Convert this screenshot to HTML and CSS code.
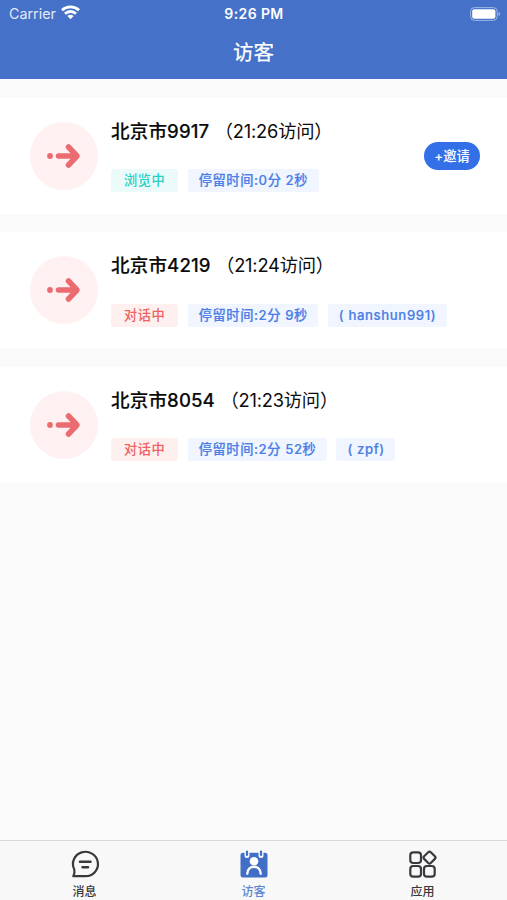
FILE: index.html
```html
<!DOCTYPE html>
<html lang="zh-CN">
<head>
<meta charset="utf-8">
<title>访客</title>
<link rel="stylesheet" href="styles.css">
</head>
<body>
<header class="header">
  <div class="status">
    <div class="carrier"><span>Carrier</span>
      <svg class="wifi" viewBox="0 0 19 15" width="19" height="15"><g fill="none" stroke="#fff" stroke-width="2.800"><path d="M1 5.300a12.400 12.400 0 0 1 17 0"/><path d="M4 8.700a8 8 0 0 1 11 0"/></g><path d="M9.500 14.300 6.400 11.100a4.500 4.500 0 0 1 6.200 0z" fill="#fff"/></svg>
    </div>
    <div class="clock">9:26 PM</div>
    <svg class="battery" viewBox="0 0 31 14" width="31" height="14"><rect x=".6" y=".6" width="26.600" height="12.800" rx="3.800" fill="none" stroke="#9db5e5" stroke-width="1"/><rect x="2.200" y="2.300" width="23.200" height="9.400" rx="2" fill="#fff"/><path d="M28.500 5v4q1.700-.6 1.700-2t-1.700-2z" fill="#9db5e5"/></svg>
  </div>
  <h1 class="title">访客</h1>
</header>
<main class="list">
  <section class="card">
    <div class="avatar"><svg viewBox="0 0 36 28" width="36" height="28"><circle cx="4" cy="14" r="2.900"/><path d="M12.500 14h18M22.500 5l8.500 9-8.500 9"/></svg></div>
    <div class="info">
      <div class="name"><b>北京市9917</b><span class="time">（21:26访问）</span></div>
      <div class="tags"><span class="tag active">浏览中</span><span class="tag">停留时间:0分 2秒</span></div>
    </div>
    <button class="invite">+邀请</button>
  </section>
  <section class="card">
    <div class="avatar"><svg viewBox="0 0 36 28" width="36" height="28"><circle cx="4" cy="14" r="2.900"/><path d="M12.500 14h18M22.500 5l8.500 9-8.500 9"/></svg></div>
    <div class="info">
      <div class="name"><b>北京市4219</b><span class="time">（21:24访问）</span></div>
      <div class="tags"><span class="tag talk">对话中</span><span class="tag">停留时间:2分 9秒</span><span class="tag">( hanshun991)</span></div>
    </div>
  </section>
  <section class="card">
    <div class="avatar"><svg viewBox="0 0 36 28" width="36" height="28"><circle cx="4" cy="14" r="2.900"/><path d="M12.500 14h18M22.500 5l8.500 9-8.500 9"/></svg></div>
    <div class="info">
      <div class="name"><b>北京市8054</b><span class="time">（21:23访问）</span></div>
      <div class="tags"><span class="tag talk">对话中</span><span class="tag">停留时间:2分 52秒</span><span class="tag">( zpf)</span></div>
    </div>
  </section>
</main>
<nav class="tabs">
  <a class="tab"><svg viewBox="0 0 30 30" width="30" height="30" fill="none" stroke="#38393d" stroke-width="2.200" stroke-linecap="round" stroke-linejoin="round"><path d="M3.300 27.200H15.500A12.500 12.200 0 1 0 4.300 20.500C4.800 23 4.400 25 3.300 27.200z"/><path d="M10 12.800h10.500M12.500 18.300h5.500" stroke-width="2.500"/></svg><span>消息</span></a>
  <a class="tab on"><svg viewBox="0 0 30 30" width="30" height="30"><rect x="1.500" y="3.800" width="27" height="24.700" rx="2.500" fill="#416fc8"/><g fill="none" stroke-linecap="round"><path d="M8 3.500v3M22 3.500v3" stroke="#f8f8f8" stroke-width="5"/><path d="M8 2.500v3.500M22 2.500v3.500" stroke="#416fc8" stroke-width="2.200"/><path d="M8.300 24.800c.3-9.500 13.100-9.500 13.400 0" stroke="#fff" stroke-width="2.400"/></g><circle cx="15" cy="12.300" r="4.300" fill="#fff"/></svg><span>访客</span></a>
  <a class="tab"><svg viewBox="0 0 30 30" width="30" height="30" fill="none" stroke="#38393d" stroke-width="2.200" stroke-linejoin="round"><rect x="2.300" y="3.300" width="10.700" height="10.700" rx="3"/><rect x="2.300" y="17" width="10.700" height="10.700" rx="3"/><rect x="16" y="17" width="10.700" height="10.700" rx="3"/><rect x="16.800" y="3.900" width="9.400" height="9.400" rx="1.800" transform="rotate(45 21.500 8.600)"/></svg><span>应用</span></a>
</nav>
</body>
</html>
```
FILE: styles.css
```css
* { box-sizing: border-box; }
body {
  margin: 0;
  height: 900px;
  display: flex;
  flex-direction: column;
  background: #fafafa;
  color: #0b0b0b;
  font-family: Inter, "Noto Sans CJK SC", sans-serif;
}
.header { height: 79px; background: #4571c8; color: #fff; flex: none; }
.status {
  height: 27px;
  display: grid;
  grid-template-columns: 1fr auto 1fr;
  align-items: center;
  padding: 0 6px 0 9px;
}
.carrier { display: flex; align-items: center; gap: 5px; font-size: 14.300px; color: #e3eaf8; line-height: 27px; }
.wifi { position: relative; top: -1px; }
.clock { font-size: 14px; font-weight: 600; letter-spacing: .4px; margin-left: -2px; }
.battery { justify-self: end; }
.title { margin: 0; font-size: 20.500px; font-weight: 400; line-height: 52px; text-align: center; -webkit-text-stroke: .25px #fff; }
.list { flex: 1; padding-top: 19px; display: flex; flex-direction: column; gap: 18.300px; }
.card { height: 116px; flex: none; background: #fff; display: flex; align-items: flex-start; padding: 0 27px 0 30px; }
.avatar {
  width: 68px;
  height: 68px;
  margin-top: 24px;
  border-radius: 50%;
  background: #fff1f1;
  display: flex;
  align-items: center;
  justify-content: center;
}
.avatar svg { fill: #ea6c70; }
.avatar path { fill: none; stroke: #ea6c70; stroke-width: 5.500; stroke-linecap: round; stroke-linejoin: round; }
.info { margin-left: 13px; flex: 1; padding-top: 19px; }
.name { height: 28px; line-height: 28px; font-size: 18.600px; white-space: nowrap; }
.name b { font-weight: 500; letter-spacing: .1px; -webkit-text-stroke: .15px #0b0b0b; }
.time { font-size: 18.300px; letter-spacing: -.2px; margin-left: 5.500px; }
.tags { display: flex; gap: 9.500px; margin-top: 24.300px; }
.tag {
  height: 23px;
  line-height: 23px;
  padding: 0 10.500px 0 11px;
  border-radius: 3px;
  background: #f0f5ff;
  color: #4b7fe6;
  font-size: 13.200px;
  font-weight: 500;
  letter-spacing: .6px;
  white-space: pre;
  -webkit-text-stroke: .2px #4b7fe6;
}
.active, .talk { padding: 0 13px 0 12.900px; -webkit-text-stroke: 0; }
.active { background: #eafbfa; color: #27d0c4; }
.talk { background: #fff0f0; color: #ee6262; }
.invite {
  margin: 44px 0 0;
  width: 56px;
  height: 28px;
  padding: 0;
  border: 0;
  border-radius: 14px;
  background: #3370e8;
  color: #fff;
  font: 500 13.300px/28px Inter, "Noto Sans CJK SC", sans-serif;
}
.tabs { height: 60px; flex: none; display: flex; background: #f8f8f8; border-top: 1px solid #d9d9d9; }
.tab { flex: 1; display: flex; flex-direction: column; align-items: center; padding-top: 8px; font-size: 12px; line-height: 16px; color: #38393d; }
.tab span { margin-top: 5px; font-weight: 500; }
.on { color: #5d86d2; }
```
